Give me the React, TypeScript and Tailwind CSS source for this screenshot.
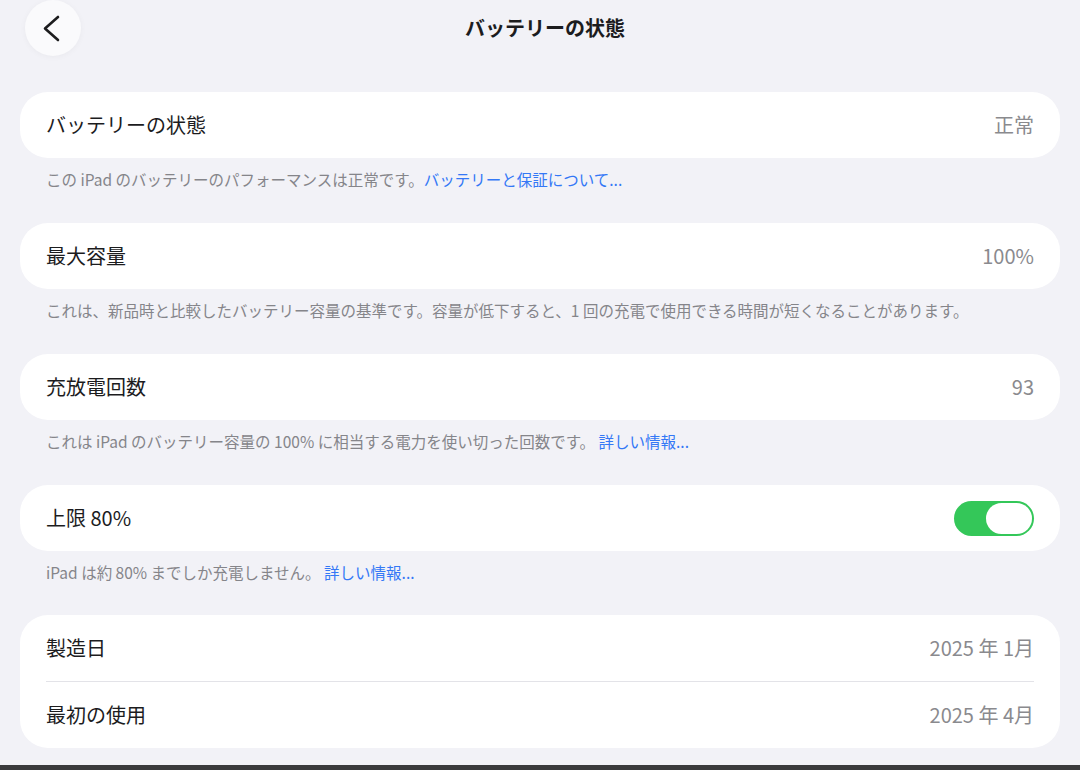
const font = { fontFamily: '"Noto Sans CJK JP", "Noto Sans", sans-serif' }

function Footer({ text, link }: { text: string; link?: string }) {
  return (
    <p className="h-[65px] px-[26px] pt-[10px] text-[15.5px] leading-[22px] text-[#85858a]">
      {text}
      {link && <span className="text-[#3478f6]">{link}</span>}
    </p>
  )
}

function Row({ label, value, children }: { label: string; value?: string; children?: React.ReactNode }) {
  return (
    <div className="h-[66px] flex items-center justify-between">
      <span className="text-[20px] text-[#1c1c1e]">{label}</span>
      {value && <span className="text-[20px] text-[#8a8a8e]">{value}</span>}
      {children}
    </div>
  )
}

function Toggle() {
  return (
    <div className="w-[80px] h-[35px] rounded-full bg-[#34c759] flex items-center justify-end p-[2px]">
      <div className="w-[46px] h-[31px] rounded-full bg-white" />
    </div>
  )
}

export default function App() {
  return (
    <div className="min-h-screen bg-[#f2f2f7] flex flex-col" style={font}>
      <div className="flex-1 px-[20px]">
        {/* Nav bar */}
        <header className="h-[56px] relative flex items-center justify-center pl-[10px]">
          <button className="absolute left-[5px] top-0 w-[56px] h-[56px] rounded-full bg-[#fafafc] shadow-[0_1px_6px_rgba(0,0,0,0.04)] flex items-center justify-center">
            <svg width="56" height="56" viewBox="0 0 56 56" fill="none">
              <path d="M33 17 L20 28.5 L33 40" stroke="#1c1c1e" strokeWidth="2.6" strokeLinecap="round" strokeLinejoin="round" />
            </svg>
          </button>
          <h1 className="text-[20px] font-bold text-[#1c1c1e]">バッテリーの状態</h1>
        </header>

        <div className="mt-[36px]">
          <div className="bg-white rounded-[28px] px-[26px]">
            <Row label="バッテリーの状態" value="正常" />
          </div>
          <Footer text="この iPad のバッテリーのパフォーマンスは正常です。" link="バッテリーと保証について..." />

          <div className="bg-white rounded-[28px] px-[26px]">
            <Row label="最大容量" value="100%" />
          </div>
          <Footer text="これは、新品時と比較したバッテリー容量の基準です。容量が低下すると、1 回の充電で使用できる時間が短くなることがあります。" />

          <div className="bg-white rounded-[28px] px-[26px]">
            <Row label="充放電回数" value="93" />
          </div>
          <Footer text="これは iPad のバッテリー容量の 100% に相当する電力を使い切った回数です。 " link="詳しい情報..." />

          <div className="bg-white rounded-[28px] px-[26px]">
            <Row label="上限 80%">
              <Toggle />
            </Row>
          </div>
          <Footer text="iPad は約 80% までしか充電しません。 " link="詳しい情報..." />

          <div className="bg-white rounded-[28px] px-[26px] -mt-[1px]">
            <Row label="製造日" value="2025 年 1月" />
            <div className="h-px bg-[#e3e3e8]" />
            <Row label="最初の使用" value="2025 年 4月" />
          </div>
        </div>
      </div>
      <div className="h-[5px] bg-[#3a3a3c] mt-[16px]" />
    </div>
  )
}
